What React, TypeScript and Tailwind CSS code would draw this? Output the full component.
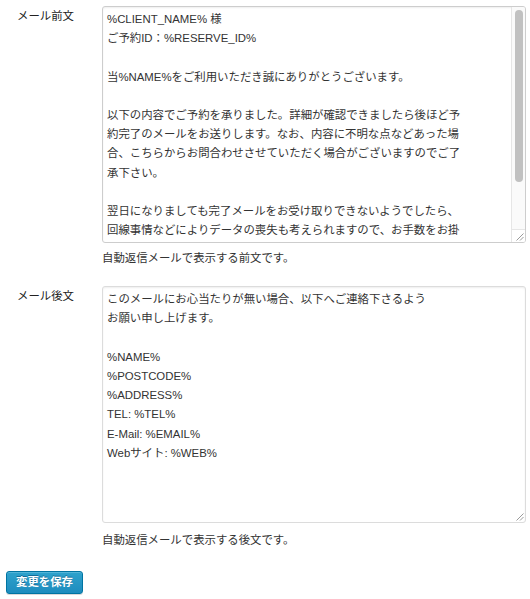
const FONT = "font-['Liberation_Sans','Noto_Sans_CJK_JP',sans-serif]";

const BEFORE_LINES = [
  "%CLIENT_NAME% 様",
  "ご予約ID：%RESERVE_ID%",
  "",
  "当%NAME%をご利用いただき誠にありがとうございます。",
  "",
  "以下の内容でご予約を承りました。詳細が確認できましたら後ほど予",
  "約完了のメールをお送りします。なお、内容に不明な点などあった場",
  "合、こちらからお問合わせさせていただく場合がございますのでご了",
  "承下さい。",
  "",
  "翌日になりましても完了メールをお受け取りできないようでしたら、",
  "回線事情などによりデータの喪失も考えられますので、お手数をお掛",
];

const AFTER_LINES = [
  "このメールにお心当たりが無い場合、以下へご連絡下さるよう",
  "お願い申し上げます。",
  "",
  "%NAME%",
  "%POSTCODE%",
  "%ADDRESS%",
  "TEL: %TEL%",
  "E-Mail: %EMAIL%",
  "Webサイト: %WEB%",
];

function Grip() {
  return (
    <svg width="9" height="9" viewBox="0 0 9 9" className="block">
      <path d="M8.5 1.5 L1.5 8.5 M8.5 5 L5 8.5" stroke="#9a9a9a" strokeWidth="1" fill="none" />
    </svg>
  );
}

function Lines({ lines }: { lines: string[] }) {
  return (
    <div className="min-w-0 flex-1 overflow-hidden pl-[4px] pt-[3px] text-[#333]">
      {lines.map((line, i) => (
        <div key={i} className="h-[19.2px] whitespace-pre">
          {line || " "}
        </div>
      ))}
    </div>
  );
}

export default function App() {
  return (
    <div className={`h-[599px] w-[530px] bg-white pl-[6px] pr-[4px] pt-[6px] text-[11.4px] leading-[19.2px] ${FONT}`}>
      {/* メール前文 */}
      <div className="flex">
        <div className="w-[96px] shrink-0 pl-[11px] pt-[1px] text-[#222]">メール前文</div>
        <div className="min-w-0 flex-1">
          <div className="flex h-[237px] overflow-hidden rounded-[3px] border border-[#cdcdcd] shadow-[inset_0_1px_2px_rgba(0,0,0,0.07)]">
            <Lines lines={BEFORE_LINES} />
            <div className="flex w-[14px] shrink-0 flex-col border-l border-[#e6e6e6] bg-[#fafafa]">
              <div className="flex-1 pt-[3px]">
                <div className="mx-auto h-[172px] w-[8px] rounded-full bg-[#c1c1c1]" />
              </div>
              <div className="flex h-[13px] items-end justify-end border-t border-[#e6e6e6] bg-white pb-[1px] pr-[1px]">
                <Grip />
              </div>
            </div>
          </div>
          <p className="mt-[6px] text-[#333]">自動返信メールで表示する前文です。</p>
        </div>
      </div>

      {/* メール後文 */}
      <div className="mt-[18px] flex">
        <div className="w-[96px] shrink-0 pl-[11px] pt-[1px] text-[#222]">メール後文</div>
        <div className="min-w-0 flex-1">
          <div className="relative flex h-[237px] overflow-hidden rounded-[3px] border border-[#dcdcdc] shadow-[inset_0_1px_2px_rgba(0,0,0,0.07)]">
            <Lines lines={AFTER_LINES} />
            <div className="absolute bottom-[1px] right-[1px]">
              <Grip />
            </div>
          </div>
          <p className="mt-[8px] text-[#333]">自動返信メールで表示する後文です。</p>
        </div>
      </div>

      <button
        type="button"
        className="mt-[21px] flex h-[23px] w-[77px] items-center justify-center rounded-[3px] border border-[#0074a2] bg-linear-to-b from-[#2ea2cc] to-[#1e8cbe] font-bold text-white shadow-[inset_0_1px_0_rgba(120,200,230,0.5),0_1px_0_rgba(0,0,0,0.15)] [text-shadow:0_-1px_0_rgba(0,60,100,0.5)]"
      >
        変更を保存
      </button>
    </div>
  );
}
